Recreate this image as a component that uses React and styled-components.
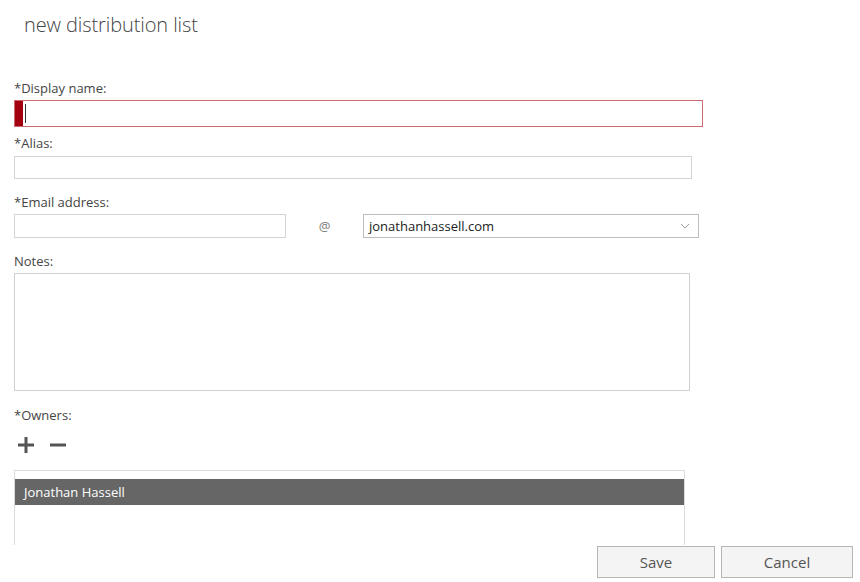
import React, { useState } from 'react';
import styled, { createGlobalStyle } from 'styled-components';

const GlobalStyle = createGlobalStyle`
  html, body {
    margin: 0;
    padding: 0;
    background: #ffffff;
    font-family: "Open Sans", "Noto Sans", Arial, sans-serif;
  }
`;

const Page = styled.div`
  width: 860px;
  height: 582px;
  overflow: hidden;
  box-sizing: border-box;
  padding: 10px 7px 0 14px;
  display: flex;
  flex-direction: column;
`;

const Title = styled.h1`
  margin: 0 0 0 10px;
  font-size: 20px;
  font-weight: 300;
  line-height: 30px;
  color: #444;
  letter-spacing: -0.1px;
`;

const Form = styled.form`
  display: flex;
  flex-direction: column;
  margin: 40px 0 0 0;
`;

const Field = styled.div`
  display: flex;
  flex-direction: column;
  margin-bottom: ${(p) => p.gap ?? 9}px;
`;

const Label = styled.label`
  font-size: 13px;
  line-height: 17px;
  color: #444;
  margin-bottom: 3px;
`;

const InputWrap = styled.div`
  position: relative;
  width: ${(p) => p.width}px;
`;

const Input = styled.input`
  box-sizing: border-box;
  width: 100%;
  height: ${(p) => p.height || 23}px;
  border: 1px solid ${(p) => (p.invalid ? '#cd6b70' : '#d4d4d4')};
  padding: 0 0 0 ${(p) => (p.invalid ? 11 : 5)}px;
  font-family: inherit;
  font-size: 13px;
  color: #222;
  outline: none;
  background: #fff;
`;

const ErrorMark = styled.span`
  position: absolute;
  left: 1px;
  top: 1px;
  bottom: 1px;
  width: 8px;
  background: #a30010;
`;

const Caret = styled.span`
  position: absolute;
  left: 11px;
  top: 4px;
  bottom: 4px;
  width: 1px;
  background: #333;
`;

const Row = styled.div`
  display: flex;
  align-items: center;
`;

const At = styled.span`
  width: 77px;
  text-align: center;
  font-size: 13px;
  color: #777;
`;

const Select = styled.div`
  box-sizing: border-box;
  width: 336px;
  height: 24px;
  border: 1px solid #bdbdbd;
  display: flex;
  align-items: center;
  justify-content: space-between;
  padding: 0 8px 0 5px;
  font-size: 13px;
  color: #222;
`;

const TextArea = styled.textarea`
  box-sizing: border-box;
  width: 676px;
  height: 118px;
  border: 1px solid #d0d0d0;
  resize: none;
  outline: none;
  font-family: inherit;
  display: block;
`;

const Tools = styled.div`
  display: flex;
  gap: 14px;
  padding: 9px 0 0 3px;
  height: 24px;
  margin-bottom: 10px;
`;

const ToolButton = styled.button`
  border: none;
  background: none;
  padding: 0;
  width: 18px;
  height: 18px;
  cursor: pointer;
`;

const List = styled.div`
  width: 671px;
  height: 75px;
  box-sizing: border-box;
  border: 1px solid #d8dcdc;
  border-bottom: none;
  padding-top: 8px;
`;

const ListItem = styled.div`
  height: 26px;
  line-height: 26px;
  padding-left: 9px;
  font-size: 13px;
  background: ${(p) => (p.selected ? '#666666' : 'transparent')};
  color: ${(p) => (p.selected ? '#fff' : '#333')};
`;

const Footer = styled.div`
  display: flex;
  justify-content: flex-end;
  gap: 6px;
  margin-top: 1px;
`;

const Button = styled.button`
  box-sizing: border-box;
  width: ${(p) => p.width}px;
  height: 32px;
  margin: 0;
  background: #f4f4f4;
  border: 1px solid #b6b6b6;
  font-family: inherit;
  font-size: 15px;
  color: #555;
  cursor: pointer;
`;

const Chevron = () => (
  <svg width="10" height="6" viewBox="0 0 10 6">
    <path d="M1 1l4 4 4-4" fill="none" stroke="#999" strokeWidth="1" />
  </svg>
);

const Plus = () => (
  <svg width="18" height="18" viewBox="0 0 18 18">
    <path d="M9 1v16M1 9h16" stroke="#555" strokeWidth="3" />
  </svg>
);

const Minus = () => (
  <svg width="18" height="18" viewBox="0 0 18 18">
    <path d="M1 9h16" stroke="#555" strokeWidth="3" />
  </svg>
);

const App = () => {
  const [owners] = useState(['Jonathan Hassell']);

  return (
    <>
      <GlobalStyle />
      <Page>
        <Title>new distribution list</Title>
        <Form onSubmit={(e) => e.preventDefault()}>
          <Field gap={8}>
            <Label>*Display name:</Label>
            <InputWrap width={689}>
              <Input invalid height={27} />
              <ErrorMark />
              <Caret />
            </InputWrap>
          </Field>
          <Field gap={15}>
            <Label>*Alias:</Label>
            <InputWrap width={678}>
              <Input />
            </InputWrap>
          </Field>
          <Field gap={15}>
            <Label>*Email address:</Label>
            <Row>
              <InputWrap width={272}>
                <Input height={24} />
              </InputWrap>
              <At>@</At>
              <Select>
                <span>jonathanhassell.com</span>
                <Chevron />
              </Select>
            </Row>
          </Field>
          <Field gap={16}>
            <Label>Notes:</Label>
            <TextArea />
          </Field>
          <Field gap={0}>
            <Label>*Owners:</Label>
            <Tools>
              <ToolButton type="button"><Plus /></ToolButton>
              <ToolButton type="button"><Minus /></ToolButton>
            </Tools>
            <List>
              {owners.map((o) => (
                <ListItem key={o} selected>{o}</ListItem>
              ))}
            </List>
          </Field>
        </Form>
        <Footer>
          <Button type="button" width={118}>Save</Button>
          <Button type="button" width={132}>Cancel</Button>
        </Footer>
      </Page>
    </>
  );
};

export default App;
